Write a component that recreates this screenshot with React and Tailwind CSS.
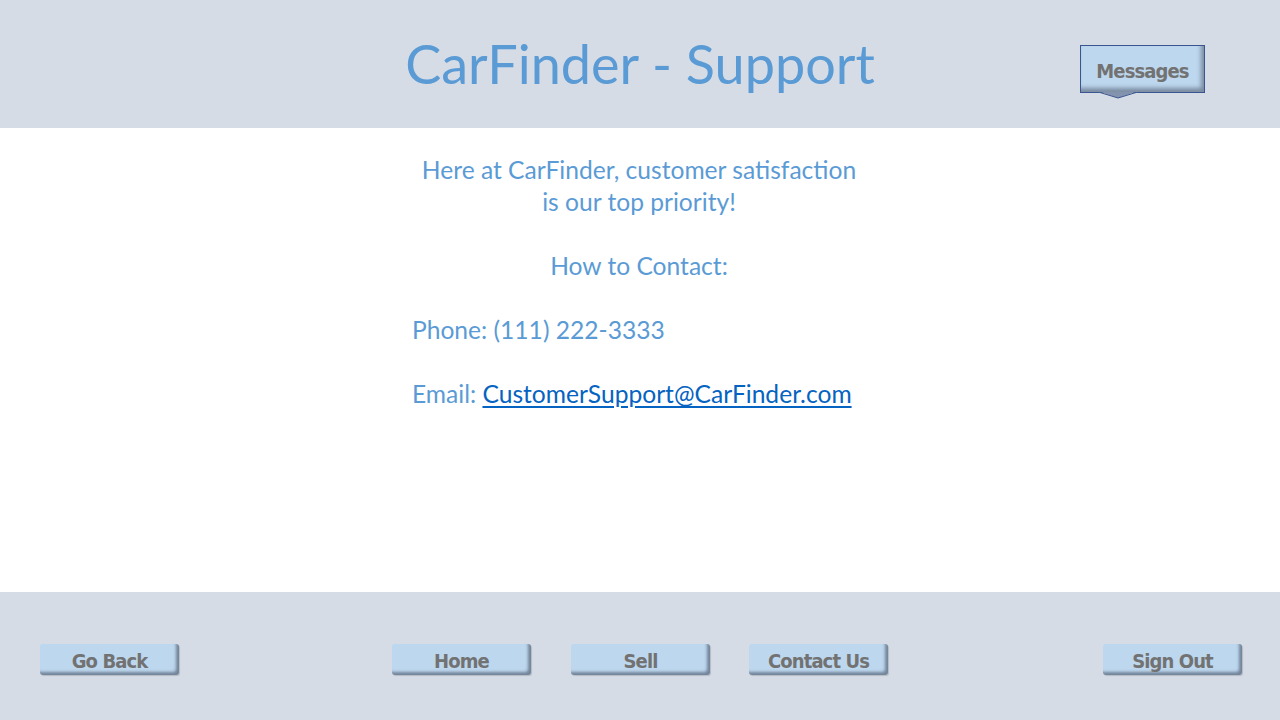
import React from "react"

const buttonFont = { fontFamily: '"DejaVu Sans", sans-serif' }

const NavButton = ({ children }) => (
  <button
    type="button"
    className="w-[139px] h-[31px] rounded-[3px] bg-[#bdd7ee] text-[#727272] font-bold font-stretch-condensed text-[20px] leading-none tracking-[-0.9px] shadow-[inset_-3px_-3px_3px_rgba(55,65,85,0.55),1px_1px_1px_rgba(0,0,0,0.15)] flex items-center justify-center pt-[3px]"
    style={buttonFont}
  >
    {children}
  </button>
)

export default function App() {
  return (
    <div className="w-[1280px] h-[720px] flex flex-col bg-white" style={{ fontFamily: 'Lato, "Open Sans", sans-serif' }}>
      <header className="h-[128px] bg-[#d6dce5] relative flex justify-center">
        <h1 className="text-[#5b9bd5] text-[54px] leading-none mt-[37px]">CarFinder - Support</h1>
        <div className="absolute left-[1080px] top-[45px]">
          <div
            className="relative w-[125px] h-[48px] bg-[#bdd7ee] border border-[#3a5590] text-[#727272] font-bold font-stretch-condensed text-[20px] flex items-center justify-center pt-[3px] shadow-[inset_-3px_-4px_4px_rgba(55,65,85,0.5)] tracking-[-0.9px]"
            style={buttonFont}
          >
            Messages
          </div>
          <svg className="absolute left-[18px] top-[47px]" width="40" height="7" viewBox="0 0 40 7">
            <path d="M0 0 L40 0 L36 0.5 L20 6 L4 0.5 Z" fill="#8393ad" />
            <path d="M2 0.5 L20 6 L38 0.5" fill="none" stroke="#3a5590" strokeWidth="1" />
          </svg>
        </div>
      </header>

      <main className="flex-1 pt-[26px]">
        <div className="ml-[412px] w-[454px] text-[#5b9bd5] text-[24.6px] leading-[32px]">
          <p className="text-center">Here at CarFinder, customer satisfaction</p>
          <p className="text-center">is our top priority!</p>
          <p className="text-center mt-[32px]">How to Contact:</p>
          <p className="mt-[32px]">Phone: (111) 222-3333</p>
          <p className="mt-[32px] whitespace-nowrap">
            Email:{" "}
            <a href="#" className="text-[#0563c1] underline underline-offset-[3px]">
              CustomerSupport@CarFinder.com
            </a>
          </p>
        </div>
      </main>

      <footer className="h-[128px] bg-[#d6dce5] flex items-start pt-[52px]">
        <div className="ml-[40px]"><NavButton>Go Back</NavButton></div>
        <div className="ml-[213px]"><NavButton>Home</NavButton></div>
        <div className="ml-[40px]"><NavButton>Sell</NavButton></div>
        <div className="ml-[39px]"><NavButton>Contact Us</NavButton></div>
        <div className="ml-[215px]"><NavButton>Sign Out</NavButton></div>
      </footer>
    </div>
  )
}
